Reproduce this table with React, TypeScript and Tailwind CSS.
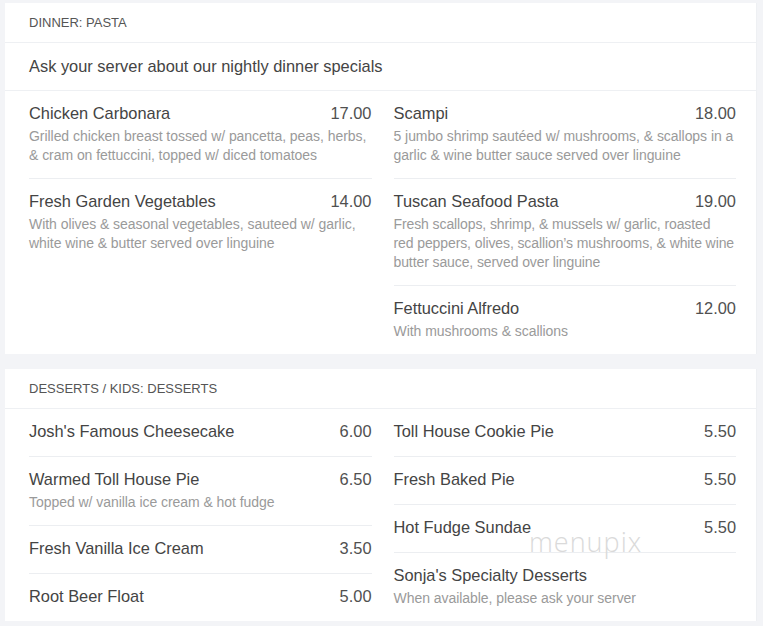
import React from "react";

type Item = { name: string; price?: string; desc?: string };

const dinnerLeft: Item[] = [
  {
    name: "Chicken Carbonara",
    price: "17.00",
    desc: "Grilled chicken breast tossed w/ pancetta, peas, herbs, & cram on fettuccini, topped w/ diced tomatoes",
  },
  {
    name: "Fresh Garden Vegetables",
    price: "14.00",
    desc: "With olives & seasonal vegetables, sauteed w/ garlic, white wine & butter served over linguine",
  },
];

const dinnerRight: Item[] = [
  {
    name: "Scampi",
    price: "18.00",
    desc: "5 jumbo shrimp sautéed w/ mushrooms, & scallops in a garlic & wine butter sauce served over linguine",
  },
  {
    name: "Tuscan Seafood Pasta",
    price: "19.00",
    desc: "Fresh scallops, shrimp, & mussels w/ garlic, roasted\nred peppers, olives, scallion’s mushrooms, & white wine\nbutter sauce, served over linguine",
  },
  { name: "Fettuccini Alfredo", price: "12.00", desc: "With mushrooms & scallions" },
];

const dessertLeft: Item[] = [
  { name: "Josh's Famous Cheesecake", price: "6.00" },
  { name: "Warmed Toll House Pie", price: "6.50", desc: "Topped w/ vanilla ice cream & hot fudge" },
  { name: "Fresh Vanilla Ice Cream", price: "3.50" },
  { name: "Root Beer Float", price: "5.00" },
];

const dessertRight: Item[] = [
  { name: "Toll House Cookie Pie", price: "5.50" },
  { name: "Fresh Baked Pie", price: "5.50" },
  { name: "Hot Fudge Sundae", price: "5.50" },
  { name: "Sonja's Specialty Desserts", desc: "When available, please ask your server" },
];

function Column({ items }: { items: Item[] }) {
  return (
    <div className="flex flex-col divide-y divide-[#eceef1]">
      {items.map((it) => (
        <div key={it.name} className="pt-[10px] pb-[13px]">
          <div className="flex justify-between items-center text-[16.4px] leading-[24px] text-[#444]">
            <span>{it.name}</span>
            {it.price && <span className="text-[#505050]">{it.price}</span>}
          </div>
          {it.desc && (
            <div
              className={
                it.desc.includes("\n")
                  ? "mt-[2px] text-[14px] leading-[19px] tracking-[-0.1px] text-[#9a9a9a] whitespace-pre"
                  : "mt-[2px] text-[14px] leading-[19px] tracking-[-0.05px] text-[#9a9a9a]"
              }
            >
              {it.desc}
            </div>
          )}
        </div>
      ))}
    </div>
  );
}

function Card({
  title,
  note,
  left,
  right,
}: {
  title: string;
  note?: string;
  left: Item[];
  right: Item[];
}) {
  return (
    <div className="bg-white ml-[5px] mr-[6px] border-r border-[#eef0f3]">
      <div className="h-[40px] flex items-center pl-6 border-b border-[#eef0f3] text-[13px] text-[#555] uppercase">
        {title}
      </div>
      {note && (
        <div className="h-[48px] flex items-center pl-6 border-b border-[#eef0f3] text-[16.4px] text-[#444]">
          {note}
        </div>
      )}
      <div className="grid grid-cols-2 gap-x-[22px] pl-6 pr-[20px]">
        <Column items={left} />
        <Column items={right} />
      </div>
    </div>
  );
}

export default function App() {
  return (
    <div
      className="relative w-[763px] h-[626px] bg-[#f3f4f7] pt-[3px] overflow-hidden"
      style={{ fontFamily: '"Liberation Sans", Arial, sans-serif' }}
    >
      <Card
        title="Dinner: Pasta"
        note="Ask your server about our nightly dinner specials"
        left={dinnerLeft}
        right={dinnerRight}
      />
      <div className="h-[15px]" />
      <Card title="Desserts / Kids: Desserts" left={dessertLeft} right={dessertRight} />
      <div
        className="absolute left-[529px] top-[527px] text-[27px] leading-[30px] text-[#dadada] tracking-[1px] pointer-events-none"
        style={{ fontFamily: '"Open Sans", sans-serif', fontWeight: 300 }}
      >
        menupix
      </div>
    </div>
  );
}
